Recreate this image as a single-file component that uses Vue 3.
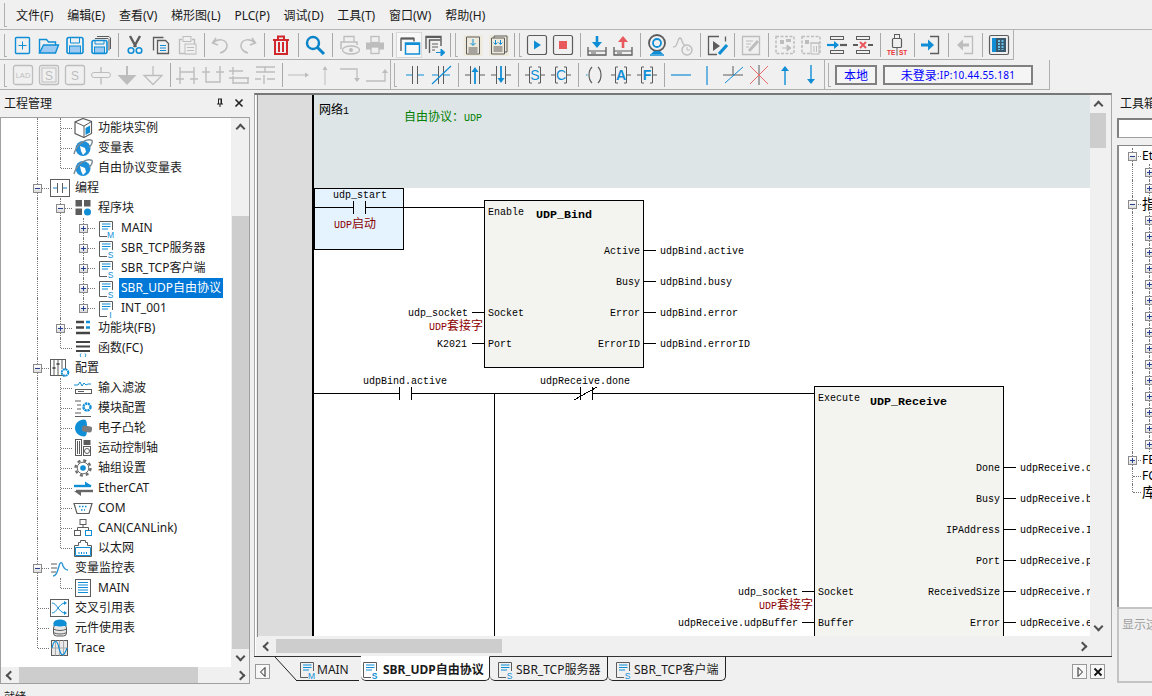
<template>
  <div class="app">
    <div class="menubar">
      <span class="grip menu-grip"></span>
      <span v-for="m in menus" :key="m" class="menu-item">{{ m }}</span>
    </div>

    <div class="toolbar toolbar-one">
      <template v-for="(item, i) in toolbarOne" :key="i">
        <span v-if="item === '|'" class="sep"></span>
        <span v-else-if="item === ']'" class="sep-grip"><i class="sep-line"></i><i class="grip"></i></span>
        <span v-else class="tool" :class="{ 'tool-on': item === 'windows' }"><svg viewBox="0 0 24 24" width="24" height="24" fill="none" v-html="icons[item]"></svg></span>
      </template>
    </div>

    <div class="toolbar toolbar-two">
      <template v-for="(item, i) in toolbarTwo" :key="i">
        <span v-if="item === '|'" class="sep"></span>
        <span v-else-if="item === ']'" class="sep-grip band-end"><i class="grip"></i></span>
        <span v-else class="tool"><svg viewBox="0 0 24 24" width="24" height="24" fill="none" v-html="icons[item]"></svg></span>
      </template>
      <div class="conn-panel">
        <i class="grip"></i>
        <span class="conn-btn conn-local">本地</span>
        <span class="conn-btn conn-ip">未登录<small>:IP:10.44.55.181</small></span>
      </div>
    </div>

    <div class="workspace">
      <aside class="project">
        <div class="pane-title">
          <span>工程管理</span>
          <svg class="pin" viewBox="0 0 10 10" width="10" height="10"><path d="M3 1h4M3.500 1v5M6.500 1v5M2 6h6M5 6v3M6 1v5" stroke="#222" fill="none" /></svg>
          <svg class="close" viewBox="0 0 10 10" width="10" height="10"><path d="M1.500 1.500l7 7M8.500 1.500l-7 7" stroke="#222" stroke-width="1.600" /></svg>
        </div>
        <div class="project-box">
          <div class="project-main">
            <div class="tree">
              <div v-for="row in projectTree" :key="row.label + row.guides" class="row">
                <span v-for="(g, i) in row.guides" :key="i" class="col" :class="guideClass[g]">
                  <i v-if="row.toggle && i === row.guides.length - 1" class="toggle" :class="{ minus: row.toggle === '-' }"></i>
                </span>
                <svg class="row-icon" viewBox="0 0 20 20" width="20" height="20" fill="none" v-html="treeIcons[row.icon]"></svg>
                <span class="row-label" :class="{ selected: row.selected }">{{ row.label }}</span>
              </div>
            </div>
            <div class="vscroll project-vscroll">
              <i class="chev chev-up"></i>
              <div class="vtrack"><div class="vthumb"></div></div>
              <i class="chev chev-down"></i>
            </div>
          </div>
          <div class="hscroll project-hscroll">
            <i class="chev chev-left"></i>
            <div class="htrack"><div class="hthumb"></div></div>
            <i class="chev chev-right"></i>
          </div>
        </div>
      </aside>

      <main class="editor">
        <div class="frame">
          <div class="frame-top">
            <svg class="ladder" viewBox="258 95 832 541" width="832" height="541">
              <rect x="258" y="95" width="54" height="541" fill="#dcdcdc" />
              <rect x="314" y="95" width="776" height="93" fill="#dde5e6" />
              <rect x="314" y="188" width="776" height="448" fill="#fff" />
              <rect x="312" y="95" width="2" height="541" fill="#000" />

              <rect x="314.500" y="188.500" width="89" height="61" fill="#e5f3ff" stroke="#000" />
              <rect x="484.500" y="200.500" width="159" height="167" fill="#f3f4ef" stroke="#000" />
              <rect x="814.500" y="386.500" width="189" height="260" fill="#f3f4ef" stroke="#000" />

              <path class="wire" d="M314 207.500H353M365 207.500H484M353.500 201V214M365.500 201V214" />
              <path class="wire" d="M644 250.500H656M644 281.500H656M644 312.500H656M644 343.500H656M472 312.500H484M472 343.500H484" />
              <path class="wire" d="M314 393.500H399M411 393.500H580M592 393.500H814M399.500 387V400M411.500 387V400M580.500 387V400M592.500 387V400M574 400L597 387" />
              <path class="wire" d="M494.500 393V636" />
              <path class="wire" d="M1004 467.500H1016M1004 498.500H1016M1004 529.500H1016M1004 560.500H1016M1004 591.500H1016M1004 622.500H1016M802 591.500H814M802 622.500H814" />

              <text x="319" y="114" class="net">网络<tspan class="mono">1</tspan></text>
              <text x="404" y="121" class="net green">自由协议：<tspan class="mono">UDP</tspan></text>

              <text v-for="l in ladderLabels" :key="l.t + l.x + l.y" :x="l.x" :y="l.y" :text-anchor="l.a || 'start'" class="mono">{{ l.t }}</text>
              <text x="536" y="218" class="mono-bold">UDP_Bind</text>
              <text x="870" y="405" class="mono-bold">UDP_Receive</text>

              <text x="334" y="228" class="mono red">UDP<tspan class="cn">启动</tspan></text>
              <text x="483" y="330" text-anchor="end" class="mono red">UDP<tspan class="cn">套接字</tspan></text>
              <text x="813" y="609" text-anchor="end" class="mono red">UDP<tspan class="cn">套接字</tspan></text>
            </svg>
            <div class="vscroll editor-vscroll">
              <i class="chev chev-up"></i>
              <div class="vtrack"><div class="vthumb"></div></div>
              <i class="chev chev-down"></i>
            </div>
          </div>
          <div class="hscroll editor-hscroll">
            <i class="chev chev-left"></i>
            <div class="htrack"><div class="hthumb"></div></div>
            <i class="chev chev-right"></i>
          </div>
        </div>

        <div class="tabstrip">
          <span class="tab-nav tab-nav-left"><svg viewBox="0 0 10 12" width="10" height="12"><path d="M7 1.500L2.500 6 7 10.500z" stroke="#222" fill="none" /></svg></span>
          <div class="tab tab-first">
            <svg class="tab-slant" viewBox="0 0 25 25" width="25" height="25"><path d="M0 0L22 24" stroke="#222" fill="none" /></svg>
            <svg class="tab-doc" viewBox="0 0 20 20" width="20" height="20" fill="none" v-html="treeIcons.docM"></svg>
            <span>MAIN</span>
          </div>
          <div class="tab tab-active">
            <svg class="tab-doc" viewBox="0 0 20 20" width="20" height="20" fill="none" v-html="treeIcons.docS"></svg>
            <span>SBR_UDP自由协议</span>
          </div>
          <div class="tab">
            <svg class="tab-doc" viewBox="0 0 20 20" width="20" height="20" fill="none" v-html="treeIcons.docS"></svg>
            <span>SBR_TCP服务器</span>
          </div>
          <div class="tab">
            <svg class="tab-doc" viewBox="0 0 20 20" width="20" height="20" fill="none" v-html="treeIcons.docS"></svg>
            <span>SBR_TCP客户端</span>
          </div>
          <div class="tab-fill"></div>
          <span class="tab-nav"><svg viewBox="0 0 10 12" width="10" height="12"><path d="M3 1.500L7.500 6 3 10.500z" stroke="#222" fill="none" /></svg></span>
          <span class="tab-nav"><svg viewBox="0 0 10 10" width="10" height="10"><path d="M1.500 1.500l7 7M8.500 1.500l-7 7" stroke="#111" stroke-width="1.800" /></svg></span>
        </div>
      </main>

      <aside class="toolbox">
        <div class="pane-title toolbox-title"><span>工具箱</span></div>
        <div class="toolbox-search"></div>
        <div class="toolbox-tree">
          <div v-for="(row, i) in toolboxTree" :key="i" class="row tb-row">
            <span v-for="(g, j) in row.guides" :key="j" class="col tb-col" :class="guideClass[g]">
              <i v-if="row.toggle && j === row.guides.length - 1" class="toggle" :class="{ minus: row.toggle === '-' }"></i>
            </span>
            <span class="tb-label" :class="{ 'tb-big': row.big }">{{ row.label }}</span>
          </div>
        </div>
        <div class="toolbox-desc">显示这里</div>
      </aside>
    </div>

    <div class="statusbar">就绪</div>
  </div>
</template>

<script setup>
const menus = ["文件(F)", "编辑(E)", "查看(V)", "梯形图(L)", "PLC(P)", "调试(D)", "工具(T)", "窗口(W)", "帮助(H)"];

const B = "#0f8ed6";
const G = "#5c5c5c";
const D = "#bdbdbd";
const R = "#e8585c";

const wrap = (inner, c = G) =>
  `<path d="M2 12h4M18 12h4" stroke="${c}"/><path d="M9 4H6.500v16H9M15 4h2.500v16H15" stroke="${c}"/>${inner}`;

const icons = {
  new: `<rect x="4.500" y="4.500" width="14" height="16" rx="1" stroke="${B}" stroke-width="1.400"/><path d="M11.500 8.500v8M7.500 12.500h8" stroke="${B}"/>`,
  open: `<path d="M2.500 20V6.500h7l2 2.500h7v3" stroke="${B}" stroke-width="1.400"/><path d="M2.500 20l4-8h15l-3 8z" fill="#9cc9f2" stroke="${B}" stroke-width="1.400"/>`,
  save: `<rect x="4" y="4.500" width="16" height="16" rx="2" stroke="${B}" stroke-width="1.600"/><path d="M7.500 5v5h9V5" stroke="${B}"/><rect x="6.500" y="13" width="11" height="7" fill="#9cc9f2" stroke="${B}"/>`,
  saveall: `<path d="M8 3.500h12l1.500 1.500v11M6 5.500h13l1 1v11" stroke="${G}"/><rect x="3" y="7.500" width="15" height="13" rx="2" stroke="${B}" stroke-width="1.600"/><rect x="5.500" y="14" width="10" height="6" fill="#9cc9f2" stroke="${B}"/><path d="M6 8v3h9V8" stroke="${B}"/>`,
  cut: `<path d="M7 3l6 11M17 3l-6 11" stroke="${G}" stroke-width="2.400"/><circle cx="8" cy="17.500" r="2.800" stroke="${B}" stroke-width="1.600"/><circle cx="16" cy="17.500" r="2.800" stroke="${B}" stroke-width="1.600"/>`,
  copy: `<path d="M4.500 17.500V4.500h10" stroke="${G}" stroke-width="1.300"/><path d="M8.500 7.500h8l3 3v10h-11z" stroke="${G}" stroke-width="1.300"/><path d="M11 12.500h6M11 15h6M11 17.500h6" stroke="${B}"/>`,
  paste: `<path d="M7 6.500H4.500v14h15v-14H17" stroke="${D}" stroke-width="1.300"/><rect x="8" y="3.500" width="8" height="5" stroke="${D}"/><rect x="10" y="11" width="11" height="10" fill="#f0f0f0" stroke="${D}"/><path d="M12 14.500h7M12 17.500h7" stroke="${D}"/>`,
  undo: `<path d="M7 5L3.500 10 9 12M4 10c5-5 13-4 14 2 .6 4-3 7-7 8" stroke="${D}" stroke-width="1.500"/>`,
  redo: `<path d="M17 5l3.500 5L15 12M20 10C15 5 7 6 6 12c-.6 4 3 7 7 8" stroke="${D}" stroke-width="1.500"/>`,
  trash: `<path d="M4 7h16M9 7V3.500h6V7" stroke="#d0282c" stroke-width="2"/><path d="M6 7v14h12V7M10 9v10M14 9v10" stroke="#d0282c" stroke-width="2"/>`,
  search: `<circle cx="10" cy="10" r="6" stroke="#0a84c8" stroke-width="2.400"/><path d="M14.500 14.500L21 21" stroke="#0a84c8" stroke-width="3"/>`,
  preview: `<path d="M7 9V3.500h10V9" stroke="${D}" stroke-width="1.300"/><path d="M4 16V9h16v3" stroke="${D}" stroke-width="1.500"/><ellipse cx="14" cy="17" rx="8.500" ry="4" fill="#f0f0f0" stroke="${D}" stroke-width="1.300"/><circle cx="14" cy="17" r="2" fill="${D}"/>`,
  print: `<rect x="8" y="3.500" width="8" height="6" stroke="${D}" stroke-width="1.300"/><path d="M3 9.500h18v7H3z" fill="${D}"/><rect x="8" y="14" width="8" height="6.500" fill="#f0f0f0" stroke="${D}" stroke-width="1.300"/>`,
  windows: `<path d="M4 18V5.500h13v3" stroke="${G}" stroke-width="1.400"/><path d="M4 5.500h13" stroke="${G}" stroke-width="2"/><rect x="8.500" y="10" width="14" height="11" stroke="${B}" stroke-width="1.500"/><path d="M8.500 11h14" stroke="${B}" stroke-width="2"/>`,
  switchwin: `<path d="M3 16V3.500h15V13" stroke="${G}" stroke-width="1.400"/><path d="M3 4h15" stroke="${G}" stroke-width="2"/><path d="M6.500 20V7h11" stroke="${G}" stroke-width="1.400"/><path d="M9 11h6M9 14h6M9 17h3" stroke="${G}"/><path d="M13 19.500h7M18 16l4 3.500-4 3.500z" stroke="${B}" fill="${B}"/>`,
  docin: `<rect x="2.500" y="2" width="19" height="21" fill="#eeeadb"/><path d="M5.500 21V4h13v17z" stroke="${G}"/><path d="M12 6v6M9.500 10l2.500 2.500 2.500-2.500" stroke="${B}"/><path d="M7.500 15h9M7.500 17h9M7.500 19h9" stroke="${G}"/>`,
  docins: `<rect x="2" y="2" width="20" height="21" fill="#eeeadb"/><path d="M4.500 21V5h13v16z" stroke="${G}"/><path d="M7 5V3h13v16h-2" stroke="${G}"/><path d="M8.500 7v4M6.500 9.500l2 2 2-2M13.500 7v4M11.500 9.500l2 2 2-2" stroke="${B}"/><path d="M6.500 14h9M6.500 16h9M6.500 18h9" stroke="${G}"/>`,
  play: `<rect x="2.500" y="2.500" width="19" height="19" rx="2" stroke="${G}" stroke-width="1.200"/><path d="M9 7.500l7 4.500-7 4.500z" fill="${B}"/>`,
  stop: `<rect x="2.500" y="2.500" width="19" height="19" rx="2" stroke="${G}" stroke-width="1.200"/><rect x="8" y="8" width="8" height="8" fill="${R}"/>`,
  download: `<path d="M3 14v8h18v-8" stroke="${G}" stroke-width="1.300"/><path d="M3 18h18M6 20h5" stroke="${G}"/><path d="M12 3v7" stroke="${B}" stroke-width="2.600"/><path d="M7 9h10l-5 6z" fill="${B}"/>`,
  upload: `<path d="M3 14v8h18v-8" stroke="${G}" stroke-width="1.300"/><path d="M3 18h18M6 20h5" stroke="${G}"/><path d="M12 8v7" stroke="${R}" stroke-width="2.600"/><path d="M7 9h10l-5-6z" fill="${R}"/>`,
  camera: `<circle cx="12" cy="10" r="8" stroke="${G}" stroke-width="1.800"/><circle cx="12" cy="10" r="4" stroke="${B}" stroke-width="1.800"/><path d="M9 18l-3 3h12l-3-3z" fill="${B}"/><path d="M5 22h14" stroke="${B}" stroke-width="1.500"/>`,
  trend: `<path d="M2 14c3 0 3-1 5-6 1-4 3-4 4 0 1 3 2 5 5 5" stroke="${D}" stroke-width="1.300"/><circle cx="16" cy="17" r="5" fill="#f0f0f0" stroke="${D}" stroke-width="1.400"/><path d="M16 14v3h3" stroke="${D}"/>`,
  monitor: `<path d="M14 3.500H3.500v18H12M20.500 3.500v5" stroke="${G}" stroke-width="1.300"/><path d="M8 8l7 5-7 5z" fill="${G}"/><path d="M14 21l8-9" stroke="${B}" stroke-width="3.200"/>`,
  edit: `<path d="M3.500 3.500h17v18h-17z" stroke="${D}" stroke-width="1.300"/><path d="M7 8h7M7 11h5M7 14h3" stroke="${D}"/><path d="M10 18l9-10" stroke="${D}" stroke-width="3"/>`,
  gridin: `<path d="M3 3.500h18v17H3z" stroke="${D}" stroke-dasharray="3 1.500" stroke-width="1.500"/><rect x="7" y="7" width="4" height="4" fill="${D}"/><rect x="13" y="6" width="5" height="3" fill="${D}"/><path d="M9 15h8M14 12l4 3-4 3z" fill="${D}" stroke="${D}"/>`,
  griddel: `<path d="M3 3.500h18v17H3z" stroke="${D}" stroke-dasharray="3 1.500" stroke-width="1.500"/><rect x="6" y="7" width="4" height="4" fill="${D}"/><rect x="12" y="10" width="8" height="11" fill="#f0f0f0" stroke="${D}"/><path d="M11 10h10M15 13v6M17.500 13v6" stroke="${D}"/>`,
  insert: `<rect x="5.500" y="3.500" width="13" height="3" stroke="${G}"/><rect x="5.500" y="17.500" width="13" height="3" stroke="${G}"/><path d="M2 12h9" stroke="${B}" stroke-width="2.200"/><path d="M9 8l5 4-5 4z" fill="${B}"/><path d="M15 12h7" stroke="${G}" stroke-width="2.200"/>`,
  remove: `<rect x="5.500" y="3.500" width="13" height="3" stroke="${G}"/><rect x="5.500" y="17.500" width="13" height="3" stroke="${G}"/><path d="M2 12h5M17 12h5" stroke="${G}" stroke-width="2.200"/><path d="M9 9l6 6M15 9l-6 6" stroke="${R}" stroke-width="2"/>`,
  usb: `<rect x="9.500" y="1.500" width="5" height="4" stroke="${G}"/><rect x="7.500" y="5.500" width="9" height="9" rx="1" stroke="${G}" stroke-width="1.200"/><path d="M12 14.500v8" stroke="${G}"/><text x="2" y="22" font-size="6.500" font-family="Liberation Sans" font-weight="700" fill="#e33">TE</text><text x="14" y="22" font-size="6.500" font-family="Liberation Sans" font-weight="700" fill="#e33">ST</text>`,
  login: `<path d="M11 3.500h8.500v17H11" stroke="${G}" stroke-width="1.300"/><path d="M2 12h9" stroke="${B}" stroke-width="3"/><path d="M9 6.500l6 5.500-6 5.500z" fill="${B}"/>`,
  logout: `<path d="M11 3.500h8.500v17H11" stroke="${D}" stroke-width="1.300"/><path d="M8 12h8" stroke="${D}" stroke-width="3"/><path d="M10 6.500L4 12l6 5.500z" fill="${D}"/>`,
  panel: `<rect x="2.500" y="2.500" width="19" height="19" rx="1.500" stroke="${G}" stroke-width="1.200"/><rect x="5" y="5" width="4" height="14" fill="${B}"/><rect x="9" y="5" width="10" height="14" fill="#37596b"/><path d="M12 7v10M15.500 7v10" stroke="#6cc2ea" stroke-width="2" stroke-dasharray="2 1"/>`,

  lad: `<rect x="2.500" y="2.500" width="19" height="19" rx="2" stroke="${D}" stroke-width="1.300"/><text x="12" y="15" text-anchor="middle" font-size="7.500" font-family="Liberation Sans" fill="${D}">LAD</text>`,
  sboxd: `<rect x="2.500" y="2.500" width="19" height="19" rx="2" stroke="${D}" stroke-width="1.300"/><rect x="5" y="5" width="14" height="14" stroke="${D}"/><text x="12" y="16.500" text-anchor="middle" font-size="12" font-family="Liberation Sans" fill="${D}">S</text>`,
  sbox: `<rect x="2.500" y="2.500" width="19" height="19" rx="2" stroke="${D}" stroke-width="1.300"/><text x="12" y="16.500" text-anchor="middle" font-size="12" font-family="Liberation Sans" fill="${D}">S</text>`,
  rail: `<path d="M12 4v5M12 14.500v7" stroke="${D}" stroke-width="1.400"/><rect x="2.500" y="9.500" width="19" height="5" rx="2.500" fill="#f0f0f0" stroke="${D}"/>`,
  downfill: `<path d="M12 3v9" stroke="${D}" stroke-width="2"/><path d="M2.500 12h19L12 22z" fill="${D}"/>`,
  downline: `<path d="M12 3v9" stroke="${D}" stroke-width="1.300"/><path d="M3 12.500h18L12 21.500z" stroke="${D}" stroke-width="1.300"/>`,
  branch1: `<path d="M5 4v17M19 4v17M5 9h14M1 16h8M15 16h8" stroke="${D}" stroke-width="1.400"/>`,
  branch2: `<path d="M5 4v15h14V4M1 9h8M15 9h8M19 3v11" stroke="${D}" stroke-width="1.400"/>`,
  branch3: `<path d="M2 8h14M2 15h20M6 20h15M6 4v8M6 13v8M21 15v6" stroke="${D}" stroke-width="1.400"/>`,
  branch4: `<path d="M3 4h19M3 9h19M2 16h6M14 16h8M12 4v5M11 12v9" stroke="${D}" stroke-width="1.400"/>`,
  wirer: `<path d="M1 12h20" stroke="${D}"/><path d="M18 9.500l4 2.500-4 2.500" fill="${D}"/>`,
  wireu: `<path d="M12 22V4" stroke="${D}"/><path d="M9.500 7L12 3l2.500 4" fill="${D}"/>`,
  wirerd: `<path d="M1 6h17v12" stroke="${D}" stroke-width="1.300"/><path d="M15 15h6l-3 4z" fill="${D}"/>`,
  wireru: `<path d="M1 18h19V8" stroke="${D}" stroke-width="1.300"/><path d="M17 10h6l-3-4z" fill="${D}"/>`,
  no: `<path d="M3 12h6M15 12h6" stroke="${B}"/><path d="M9.500 3v18M14.500 3v18" stroke="${G}"/>`,
  nc: `<path d="M3 12h6M15 12h6" stroke="${B}"/><path d="M9.500 3v18M14.500 3v18" stroke="${G}"/><path d="M3 21L22 3" stroke="${B}" stroke-width="1.200"/>`,
  pup: `<path d="M2 12h5M17 12h5M7.500 3v18M16.500 3v18" stroke="${G}"/><path d="M12 21V8" stroke="${B}" stroke-width="1.800"/><path d="M8.500 9L12 4l3.500 5z" fill="${B}"/>`,
  pdown: `<path d="M2 12h5M17 12h5M7.500 3v18M16.500 3v18" stroke="${G}"/><path d="M12 3v13" stroke="${B}" stroke-width="1.800"/><path d="M8.500 15l3.500 5 3.500-5z" fill="${B}"/>`,
  set: wrap(`<text x="12" y="17" text-anchor="middle" font-size="14" font-family="Liberation Sans" fill="${B}">S</text>`),
  call: wrap(`<text x="12" y="17" text-anchor="middle" font-size="14" font-family="Liberation Sans" fill="${B}">C</text>`),
  coil: `<path d="M9 4C5 8 5 16 9 20M15 4c4 4 4 12 0 16" stroke="${G}" stroke-width="1.200"/><path d="M3 12h1.500" stroke="${B}"/>`,
  ablock: wrap(`<text x="12" y="17" text-anchor="middle" font-size="14" font-weight="700" font-family="Liberation Sans" fill="${B}">A</text>`),
  fblock: wrap(`<text x="12" y="17" text-anchor="middle" font-size="14" font-weight="700" font-family="Liberation Sans" fill="${B}">F</text>`),
  hline: `<path d="M2 12h20" stroke="${B}" stroke-width="1.200"/>`,
  vline: `<path d="M12 3v19" stroke="${B}" stroke-width="1.200"/>`,
  slash: `<path d="M2 12h20" stroke="${G}"/><path d="M12 3v9" stroke="${G}" /><path d="M4 20L22 4" stroke="${B}"/>`,
  xcross: `<path d="M12 2v20" stroke="${G}"/><path d="M3 3l18 18M21 3L3 21" stroke="#ea6a6a"/>`,
  arrup: `<path d="M12 22V6" stroke="${B}" stroke-width="1.400"/><path d="M8 8l4-5 4 5z" fill="${B}"/>`,
  arrdown: `<path d="M12 2v16" stroke="${B}" stroke-width="1.400"/><path d="M8 16l4 5 4-5z" fill="${B}"/>`,
};

const toolbarOne = [
  "new", "open", "save", "saveall", "|", "cut", "copy", "paste", "|", "undo", "redo", "|", "trash", "|", "search", "|",
  "preview", "print", "|", "windows", "switchwin", "]", "docin", "docins", "]", "play", "stop", "|", "download", "upload", "|",
  "camera", "trend", "|", "monitor", "|", "edit", "|", "gridin", "griddel", "insert", "remove", "|", "usb", "|", "login", "|", "logout", "|", "panel",
];

const toolbarTwo = [
  "lad", "sboxd", "sbox", "rail", "downfill", "downline", "|", "branch1", "branch2", "branch3", "branch4", "|", "wirer", "wireu", "wirerd", "wireru", "]",
  "no", "nc", "|", "pup", "pdown", "|", "set", "call", "|", "coil", "ablock", "fblock", "|", "hline", "vline", "slash", "xcross", "arrup", "arrdown",
];

// 14x16 page with a blue kind letter in its lower right corner
const doc = (letter) =>
  `<path d="M11 18.500H3.500V3.500h13V12" stroke="#5c5c5c"/><path d="M6 6h8.500M6 8.500h8.500M6 11h6" stroke="${B}" stroke-width="1.200"/><text x="14.500" y="19.500" text-anchor="middle" font-size="8.500" font-family="Liberation Sans" fill="${B}">${letter}</text>`;

const treeIcons = {
  cube: `<path d="M10 .5l8.500 3v12l-7.500 4-9-4V4z" fill="#fff" stroke="#5c5c5c" stroke-width="1.200"/><path d="M2 4l9 4 7.500-4.500M11 8v11" stroke="#5c5c5c"/><path d="M12.500 10l4.500-2.500v7l-4.500 2.500z" fill="${B}"/>`,
  globe: `<circle cx="10" cy="10.500" r="7.500" fill="#1c8fda"/><path d="M1 16C4 5 14 0 19 2.500c1 2-1 5-3 7" stroke="#7b8a95" stroke-width="1.400"/><path d="M7 8l5 2 1 4-3 3-2-4z" fill="#fff"/>`,
  ladder: `<rect x="0.500" y="1.500" width="19" height="17" stroke="#5c5c5c"/><path d="M3 10h4M13 10h4" stroke="#1680c0"/><path d="M7.500 5v10M12.500 5v10" stroke="#5c5c5c"/>`,
  blocks: `<rect x="2.500" y="2" width="6.500" height="6.500" fill="#5c5c5c"/><rect x="11" y="2" width="6.500" height="6.500" fill="#5c5c5c"/><rect x="2.500" y="10.500" width="6.500" height="6.500" fill="#5c5c5c"/><circle cx="14.500" cy="14" r="3.500" fill="${B}"/>`,
  docM: doc("M"),
  docS: doc("S"),
  docI: doc("I"),
  fb: `<path d="M3 4h8M3 9.500h8M3 15h14" stroke="#444" stroke-width="2.400"/><path d="M13 4h4M13 9.500h4" stroke="${B}" stroke-width="2.400"/>`,
  fc: `<path d="M3 4h14M3 8.500h14M3 13h14" stroke="#444" stroke-width="2"/><path d="M8 15.500c-1 1-1 2.500 0 3.500M12 15.500c1 1 1 2.500 0 3.500" stroke="${B}"/>`,
  config: `<rect x="0.500" y="1.500" width="15" height="16" stroke="#5c5c5c"/><path d="M4 2v15M8 2v15M12 2v9" stroke="#5c5c5c"/><rect x="2.500" y="9" width="3" height="2" fill="#5c5c5c"/><rect x="6.500" y="5" width="3" height="2" fill="#5c5c5c"/><circle cx="15" cy="14.500" r="3.300" fill="#fff" stroke="${B}" stroke-width="2" stroke-dasharray="2 .6"/>`,
  filter: `<path d="M1 7h4l2-3 2 4 2-3 2 2 2-1h3" stroke="${B}"/><rect x="2.500" y="11.500" width="16" height="4" stroke="#5c5c5c"/><path d="M5 13.500h6" stroke="#5c5c5c"/>`,
  module: `<path d="M2 3h6M4 7h4M4 11h4M2 15h6M2 18.500h16" stroke="#5c5c5c"/><circle cx="14" cy="9" r="3.500" stroke="${B}" stroke-width="2.400" stroke-dasharray="2.200 .6"/>`,
  cam: `<path d="M11 1.500C6 2 2 5 2 10s4 8 9 8.500c3 0 3-5 3-8.500s0-8.500-3-8.500z" fill="${B}"/><rect x="9" y="8" width="10" height="6" rx="2" fill="#7c7c7c" transform="rotate(10 14 11)"/>`,
  axis: `<rect x="2.500" y="1.500" width="6" height="16" stroke="#5c5c5c"/><path d="M4.500 3v13M6.500 3v13" stroke="#5c5c5c"/><rect x="10.500" y="2" width="7" height="5" fill="#5c5c5c"/><rect x="10.500" y="8.500" width="7" height="9" stroke="#5c5c5c"/><circle cx="14" cy="13" r="2.500" stroke="#5c5c5c"/>`,
  gear: `<circle cx="10" cy="10" r="7.500" stroke="#6c6c6c" stroke-width="2.400" stroke-dasharray="3 2.900"/><circle cx="10" cy="10" r="5.800" stroke="#6c6c6c"/><circle cx="10" cy="10" r="2.800" fill="${B}"/>`,
  ethercat: `<path d="M1 8h17" stroke="${B}" stroke-width="2.400"/><path d="M12 3.500l7 4.500h-7z" fill="${B}"/><path d="M3 13h17" stroke="#666" stroke-width="2.400"/><path d="M8 18l-7-5h7z" fill="#666"/>`,
  com: `<path d="M1 5.500h18l-3 10H4z" stroke="#5c5c5c" stroke-width="1.200"/><path d="M6 8.500h8M8 12h4" stroke="${B}" stroke-width="1.400" stroke-dasharray="1.500 1.500"/>`,
  can: `<rect x="7" y="1.500" width="6" height="5" stroke="#5c5c5c"/><rect x="1.500" y="12.500" width="6" height="5" stroke="#5c5c5c"/><rect x="12.500" y="12.500" width="6" height="5" stroke="${B}"/><path d="M10 6.500v3M4.500 12.500v-3h11v3" stroke="#5c5c5c"/>`,
  eth: `<path d="M1.500 18.500V7.500h4v-3h2v-2h5v2h2v3h4v11z" stroke="#5c5c5c"/><path d="M2.500 9.500h15v8h-15z" stroke="${B}"/><path d="M6 14v2M8.500 14v2M11 14v2M13.500 14v2" stroke="${B}"/>`,
  watch: `<path d="M1 6h6M1 10h6M1 14h5" stroke="#5c5c5c"/><path d="M3 18c3 0 4-3 6-10 1-4 3-5 4 0 1 2 2 4 5 4" stroke="#2b95d3" stroke-width="1.400"/>`,
  list: `<rect x="2.500" y="1.500" width="15" height="17" stroke="#5c5c5c"/><path d="M5 4.500h10M5 7h10M5 9.500h10M5 12h10M5 14.500h10" stroke="${B}" stroke-width="1.100"/>`,
  cross: `<rect x="0.500" y="1.500" width="18" height="17" stroke="#5c5c5c"/><path d="M2 5c5 0 7 10 13 10M2 15c5 0 7-10 13-10" stroke="${B}"/><path d="M14 3l3 2-3 2zM14 13l3 2-3 2z" fill="${B}"/>`,
  db: `<rect x="3.500" y="7" width="13" height="11" rx="3" stroke="#5c5c5c" fill="#e8e8e8"/><path d="M3.500 11c3 2 10 2 13 0M3.500 14.500c3 2 10 2 13 0" stroke="#5c5c5c"/><ellipse cx="10" cy="5" rx="6.500" ry="3.500" fill="${B}"/><rect x="3.500" y="5" width="13" height="3" fill="${B}"/>`,
  trace: `<rect x="1.500" y="2.500" width="16" height="15" stroke="#5c5c5c" fill="#e9e9e9"/><path d="M1.500 10h16M9.500 2.500v15M5.500 2.500v15M13.500 2.500v15" stroke="#aaa"/><path d="M2 10c2-9 5-9 7 0s5 9 8 0" stroke="${B}" stroke-width="1.200"/>`,
};

const guideClass = { "|": "g-full", T: "g-branch", L: "g-last", " ": "" };

const projectTree = [
  { guides: "|T", icon: "cube", label: "功能块实例" },
  { guides: "|T", icon: "globe", label: "变量表" },
  { guides: "|L", icon: "globe", label: "自由协议变量表" },
  { guides: "T", toggle: "-", icon: "ladder", label: "编程" },
  { guides: "|T", toggle: "-", icon: "blocks", label: "程序块" },
  { guides: "||T", toggle: "+", icon: "docM", label: "MAIN" },
  { guides: "||T", toggle: "+", icon: "docS", label: "SBR_TCP服务器" },
  { guides: "||T", toggle: "+", icon: "docS", label: "SBR_TCP客户端" },
  { guides: "||T", toggle: "+", icon: "docS", label: "SBR_UDP自由协议", selected: true },
  { guides: "||L", toggle: "+", icon: "docI", label: "INT_001" },
  { guides: "|T", toggle: "+", icon: "fb", label: "功能块(FB)" },
  { guides: "|L", icon: "fc", label: "函数(FC)" },
  { guides: "T", toggle: "-", icon: "config", label: "配置" },
  { guides: "|T", icon: "filter", label: "输入滤波" },
  { guides: "|T", icon: "module", label: "模块配置" },
  { guides: "|T", icon: "cam", label: "电子凸轮" },
  { guides: "|T", icon: "axis", label: "运动控制轴" },
  { guides: "|T", icon: "gear", label: "轴组设置" },
  { guides: "|T", icon: "ethercat", label: "EtherCAT" },
  { guides: "|T", icon: "com", label: "COM" },
  { guides: "|T", icon: "can", label: "CAN(CANLink)" },
  { guides: "|L", icon: "eth", label: "以太网" },
  { guides: "T", toggle: "-", icon: "watch", label: "变量监控表" },
  { guides: "|L", icon: "list", label: "MAIN" },
  { guides: "T", icon: "cross", label: "交叉引用表" },
  { guides: "T", icon: "db", label: "元件使用表" },
  { guides: "L", icon: "trace", label: "Trace" },
];

const child = { guides: "|T", toggle: "+", label: "" };
const toolboxTree = [
  { guides: "T", toggle: "-", label: "Et" },
  child,
  child,
  { guides: "T", toggle: "-", label: "指", big: true },
  ...Array(15).fill(child),
  { guides: "T", toggle: "+", label: "FB" },
  { guides: "T", label: "FC" },
  { guides: "L", label: "库", big: true },
];

const ladderLabels = [
  { x: 360, y: 198, t: "udp_start", a: "middle" },
  { x: 488, y: 215, t: "Enable" },
  { x: 640, y: 254, t: "Active", a: "end" },
  { x: 640, y: 285, t: "Busy", a: "end" },
  { x: 640, y: 316, t: "Error", a: "end" },
  { x: 640, y: 347, t: "ErrorID", a: "end" },
  { x: 660, y: 254, t: "udpBind.active" },
  { x: 660, y: 285, t: "udpBind.busy" },
  { x: 660, y: 316, t: "udpBind.error" },
  { x: 660, y: 347, t: "udpBind.errorID" },
  { x: 488, y: 316, t: "Socket" },
  { x: 488, y: 347, t: "Port" },
  { x: 468, y: 316, t: "udp_socket", a: "end" },
  { x: 467, y: 347, t: "K2021", a: "end" },
  { x: 405, y: 384, t: "udpBind.active", a: "middle" },
  { x: 585, y: 384, t: "udpReceive.done", a: "middle" },
  { x: 818, y: 401, t: "Execute" },
  { x: 1000, y: 471, t: "Done", a: "end" },
  { x: 1000, y: 502, t: "Busy", a: "end" },
  { x: 1000, y: 533, t: "IPAddress", a: "end" },
  { x: 1000, y: 564, t: "Port", a: "end" },
  { x: 1000, y: 595, t: "ReceivedSize", a: "end" },
  { x: 1000, y: 626, t: "Error", a: "end" },
  { x: 1020, y: 471, t: "udpReceive.done" },
  { x: 1020, y: 502, t: "udpReceive.busy" },
  { x: 1020, y: 533, t: "udpReceive.IPAddress" },
  { x: 1020, y: 564, t: "udpReceive.port" },
  { x: 1020, y: 595, t: "udpReceive.receivedSize" },
  { x: 1020, y: 626, t: "udpReceive.error" },
  { x: 818, y: 595, t: "Socket" },
  { x: 818, y: 626, t: "Buffer" },
  { x: 798, y: 595, t: "udp_socket", a: "end" },
  { x: 798, y: 626, t: "udpReceive.udpBuffer", a: "end" },
];
</script>

<style>
html,
body {
  margin: 0;
  background: #f0f0f0;
  overflow: hidden;
}
</style>

<style scoped>
.app {
  position: relative;
  width: 1152px;
  height: 696px;
  overflow: hidden;
  background: #f0f0f0;
  color: #1a1a1a;
  font-family: "Noto Sans", "Noto Sans CJK SC", sans-serif;
  font-size: 12px;
  display: flex;
  flex-direction: column;
}

.menubar {
  height: 30px;
  flex: none;
  display: flex;
  align-items: center;
  padding-top: 1px;
  box-sizing: border-box;
  border-bottom: 1px solid #b5b5b5;
}

.menu-grip {
  margin-right: 9px;
  margin-left: 4px;
}

.menu-item {
  margin-right: 13.800px;
  white-space: nowrap;
}

.grip {
  display: block;
  flex: none;
  width: 2px;
  height: 23px;
  border-left: 1px solid #b0b0b0;
  border-bottom: 1px solid #b0b0b0;
}

.toolbar {
  height: 30px;
  flex: none;
  display: flex;
  align-items: center;
  padding-left: 10px;
  box-sizing: border-box;
  position: relative;
  border-bottom: 1px solid #b0b0b0;
}

.toolbar-one {
  width: 1014px;
  border-right: 1px solid #b0b0b0;
}

.toolbar-two {
  width: 1050px;
  border-right: 1px solid #b0b0b0;
}

.toolbar::before {
  content: "";
  position: absolute;
  left: 4px;
  top: 4px;
  height: 22px;
  width: 2px;
  border-left: 1px solid #b0b0b0;
  border-bottom: 1px solid #b0b0b0;
}

.tool {
  width: 26px;
  height: 26px;
  flex: none;
  display: flex;
  align-items: center;
  justify-content: center;
}

.tool-on {
  background: #f8f8f8;
  box-shadow: inset 0 0 0 1px #d8d8d8;
}

.sep {
  width: 8px;
  height: 24px;
  flex: none;
  display: flex;
  justify-content: center;
}

.sep::before {
  content: "";
  width: 1px;
  background: #a8a8a8;
}

.sep-grip {
  width: 12px;
  height: 29px;
  flex: none;
  display: flex;
  align-items: center;
  gap: 4px;
}

.sep-grip .sep-line {
  width: 1px;
  height: 24px;
  background: #a8a8a8;
  margin-left: 2px;
}

.band-end {
  border-left: 1px solid #b0b0b0;
  padding-left: 3px;
  box-sizing: border-box;
}

.conn-panel {
  width: 225px;
  height: 29px;
  flex: none;
  display: flex;
  align-items: center;
  border-left: 1px solid #b0b0b0;
  box-sizing: border-box;
  padding-left: 3px;
}

.conn-btn {
  height: 20px;
  box-sizing: border-box;
  border: 2px solid #808080;
  background: #f5f5f5;
  color: #0000ff;
  display: flex;
  align-items: center;
  justify-content: center;
  white-space: nowrap;
}

.conn-local {
  width: 42px;
  margin-left: 4px;
}

.conn-ip {
  width: 150px;
  margin-left: 6px;
}

.conn-ip small {
  font-size: 10px;
  letter-spacing: 0.25px;
}

.workspace {
  flex: 1;
  display: flex;
  min-height: 0;
}

/* project tree */
.project {
  width: 250px;
  flex: none;
  display: flex;
  flex-direction: column;
}

.pane-title {
  height: 27px;
  flex: none;
  display: flex;
  align-items: center;
  gap: 9px;
  padding: 0 4px 2px;
  font-size: 12px;
  box-sizing: border-box;
}

.pin {
  margin-left: auto;
}

.close {
  margin-right: 2px;
}

.project-box {
  height: 567px;
  flex: none;
  box-sizing: border-box;
  border: 1px solid #a0a0a0;
  display: flex;
  flex-direction: column;
}

.project-main {
  flex: 1;
  display: flex;
  min-height: 0;
}

.tree {
  width: 231px;
  flex: none;
  background: #fff;
  padding-left: 25px;
  box-sizing: border-box;
  border-right: 1px solid #f0f0f0;
}

.row {
  height: 20px;
  display: flex;
  align-items: center;
  white-space: nowrap;
}

.col {
  width: 23px;
  height: 100%;
  flex: none;
  position: relative;
}

.g-full::before,
.g-branch::before,
.g-last::before {
  content: "";
  position: absolute;
  left: 11px;
  top: 0;
  bottom: 0;
  border-left: 1px dotted #777;
}

.g-last::before {
  bottom: 50%;
}

.g-branch::after,
.g-last::after {
  content: "";
  position: absolute;
  left: 12px;
  right: 0;
  top: 50%;
  border-top: 1px dotted #777;
}

.toggle {
  position: absolute;
  z-index: 1;
  left: 7px;
  top: 6px;
  width: 9px;
  height: 9px;
  box-sizing: border-box;
  border: 1px solid #8a8a8a;
  background: linear-gradient(#fff, #dcdcdc);
}

.toggle::before {
  content: "";
  position: absolute;
  left: 1px;
  right: 1px;
  top: 3px;
  height: 1px;
  background: #2b3f8f;
}

.toggle:not(.minus)::after {
  content: "";
  position: absolute;
  top: 1px;
  bottom: 1px;
  left: 3px;
  width: 1px;
  background: #2b3f8f;
}

.row-icon {
  width: 22px;
  flex: none;
  margin-right: 2px;
}

.row-label {
  padding: 0 2px;
  height: 20px;
  line-height: 20px;
}

.selected {
  background: #0078d7;
  color: #fff;
}

.vscroll {
  flex: none;
  display: flex;
  flex-direction: column;
  align-items: center;
  background: #f0f0f0;
}

.chev {
  display: block;
  flex: none;
  width: 7px;
  height: 7px;
  box-sizing: border-box;
  border-top: 2px solid #505050;
  border-left: 2px solid #505050;
}

.chev-up {
  transform: rotate(45deg);
}

.chev-down {
  transform: rotate(225deg);
}

.chev-left {
  transform: rotate(-45deg);
}

.chev-right {
  transform: rotate(135deg);
}

.vscroll .chev {
  margin: 5.500px 0;
}

.vscroll .chev-up {
  margin: 6.500px 0 4.500px;
}

.vscroll .chev-down {
  margin: 3.500px 0 7.500px;
}

.vtrack {
  flex: 1;
  width: 100%;
  min-height: 0;
}

.hscroll {
  height: 16px;
  flex: none;
  display: flex;
  align-items: center;
  background: #f0f0f0;
}

.hscroll .chev {
  margin: 0 5.500px;
}

.htrack {
  flex: 1;
  height: 100%;
}

.vthumb,
.hthumb {
  background: #cdcdcd;
}

.project-vscroll {
  width: 17px;
}

.project-vscroll .vtrack {
  padding-top: 80px;
  box-sizing: border-box;
}

.project-vscroll .vthumb {
  height: 100%;
}

.project-hscroll .hthumb {
  width: 179px;
  height: 100%;
}

/* editor */
.editor {
  width: 858px;
  margin-left: 4px;
  flex: none;
  display: flex;
  flex-direction: column;
}

.frame {
  margin-top: 3px;
  height: 563px;
  flex: none;
  box-sizing: border-box;
  border: 1px solid #a8a8a8;
  border-top: 2px solid #777;
  border-bottom: 0;
  padding-left: 2px;
  padding-right: 3px;
  display: flex;
  flex-direction: column;
  box-shadow: inset 1px 0 0 #fff;
}

.frame-top {
  flex: 1;
  display: flex;
  min-height: 0;
  border-left: 1px solid #888;
}

.ladder {
  display: block;
  flex: none;
}

.wire {
  fill: none;
  stroke: #000;
  stroke-width: 1;
  shape-rendering: crispEdges;
}

.mono {
  font-family: "Liberation Mono", "Noto Sans CJK SC", monospace;
  font-size: 10px;
  fill: #000;
}

.mono-bold {
  font-family: "Liberation Mono", monospace;
  font-size: 11.670px;
  font-weight: 700;
  fill: #000;
}

.net {
  font-family: "Noto Sans CJK SC", sans-serif;
  font-size: 12px;
  fill: #000;
}

.green,
.green .mono {
  fill: #008000;
}

.red {
  fill: #8b0000;
}

.cn {
  font-family: "Noto Sans CJK SC", sans-serif;
  font-size: 12px;
}

.editor-vscroll {
  width: 16px;
  flex: none;
  margin-right: 1px;
}

.editor-vscroll .vthumb {
  height: 35px;
}

.editor-hscroll {
  height: 19px;
  padding-bottom: 1px;
  margin-left: 1px;
  padding-right: 17px;
  box-sizing: border-box;
}

.editor-hscroll .hthumb {
  width: 226px;
  height: 14px;
  margin-top: 2px;
}

.tabstrip {
  height: 27px;
  flex: none;
  display: flex;
  align-items: flex-start;
  border-top: 1px solid #333;
  padding-right: 4px;
  box-sizing: border-box;
}

.tab-nav {
  width: 15px;
  height: 15px;
  margin-top: 7px;
  margin-right: 3px;
  flex: none;
  box-sizing: border-box;
  border: 1px solid #999;
  display: flex;
  align-items: center;
  justify-content: center;
  background: #f7f7f7;
}

.tab-nav-left {
  margin-left: 1px;
  margin-right: 5px;
}

.tab {
  height: 25px;
  margin-top: -1px;
  border-top: 1px solid #333;
  border-right: 1px solid #222;
  border-bottom: 1px solid #222;
  border-radius: 0 0 5px 5px;
  box-sizing: border-box;
  display: flex;
  align-items: center;
  padding-left: 5px;
  flex: none;
  width: 118px;
  white-space: nowrap;
}

.tab-doc {
  flex: none;
  margin-right: 1px;
}

.tab-first {
  position: relative;
  width: 86px;
  padding-left: 22px;
  border-right: 0;
  border-radius: 0;
  border-bottom: 0;
}

.tab-first .tab-doc {
  margin-right: 0;
}

.tab-first::after {
  content: "";
  position: absolute;
  left: 22px;
  right: 2px;
  bottom: 0;
  height: 1px;
  background: #222;
}

.tab-slant {
  position: absolute;
  left: 0;
  top: 0;
}

.tab-active {
  width: 129px;
  background: #fff;
  border-top-color: #fff;
  font-weight: 700;
  padding-left: 0;
}

.tab-active .tab-doc {
  margin-left: -1px;
  margin-right: 3px;
}

.tab-fill {
  flex: 1;
}

/* toolbox */
.toolbox {
  flex: 1;
  min-width: 0;
  margin-left: 2px;
  overflow: hidden;
}

.toolbox-title {
  white-space: nowrap;
  padding-left: 6px;
  margin-bottom: 1px;
}

.toolbox-search {
  height: 20px;
  margin-left: 3px;
  box-sizing: border-box;
  border: 1px solid #a0a0a0;
  border-top: 2px solid #808080;
  border-left: 2px solid #808080;
  border-right: 0;
  background: #fff;
}

.toolbox-tree {
  margin-top: 7px;
  margin-left: 3px;
  height: 462px;
  box-sizing: border-box;
  border-top: 1px solid #888;
  border-left: 2px solid #8c8c8c;
  background: #fff;
  padding: 2px 0 0 5px;
  overflow: hidden;
}

.tb-row {
  height: 16px;
}

.tb-col {
  width: 17px;
}

.tb-col .toggle {
  left: 4px;
  top: 4px;
}

.tb-col.g-full::before,
.tb-col.g-branch::before,
.tb-col.g-last::before {
  left: 8px;
}

.tb-col.g-branch::after,
.tb-col.g-last::after {
  left: 9px;
}

.tb-label {
  font-size: 12px;
  line-height: 16px;
  color: #000;
  margin-left: 1px;
}

.tb-big {
  font-size: 14px;
}

.toolbox-desc {
  margin-left: 3px;
  height: 76px;
  box-sizing: border-box;
  border: 2px solid #c4c4c4;
  border-right: 0;
  padding: 6px 3px;
  color: #a0a0a0;
  white-space: nowrap;
}

.statusbar {
  position: absolute;
  top: 688px;
  left: 4px;
  font-size: 11px;
}
</style>
